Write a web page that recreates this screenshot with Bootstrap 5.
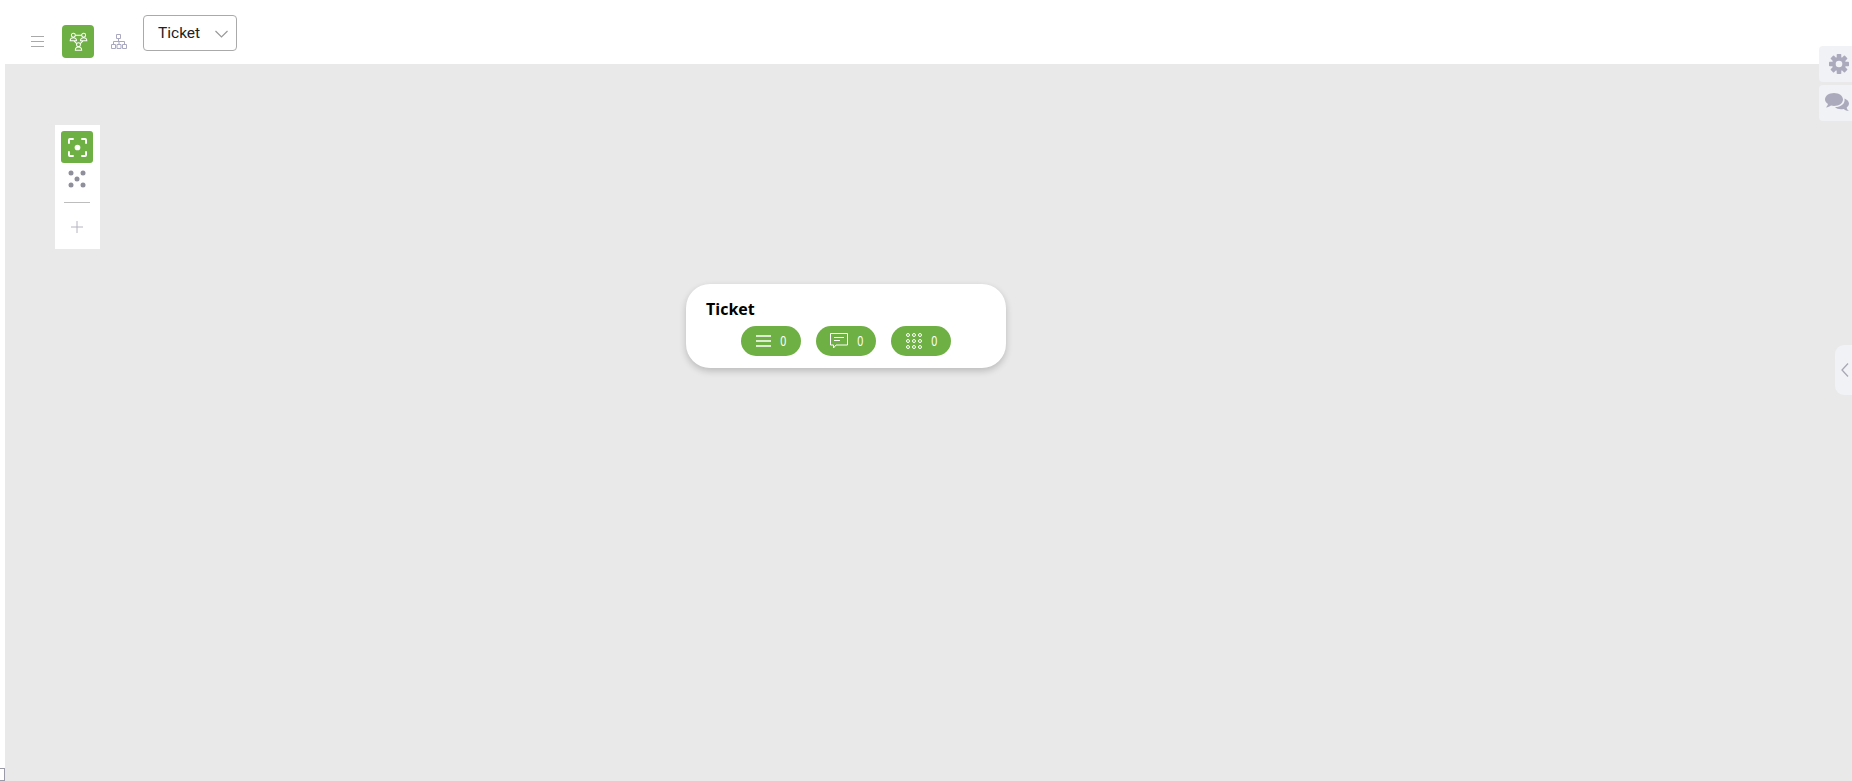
<!DOCTYPE html>
<html lang="en">
<head>
    <meta charset="UTF-8">
    <title>Ticket</title>
    <link href="https://cdn.jsdelivr.net/npm/bootstrap@5.3.2/dist/css/bootstrap.min.css" rel="stylesheet">
    <style>
        html, body { height: 100%; overflow: hidden; }
        body { font-family: Roboto, sans-serif; background: #fff; }
        .top-bar { height: 64px; padding-left: 31px; }
        .menu-btn { width: 13px; height: 11px; margin-top: 18px; }
        .mode-btn { width: 32px; height: 33px; margin: 18px 0 0 18px; background: #6eb043; border-radius: 4px; }
        .org-btn { margin: 18px 0 0 17px; width: 16px; height: 15px; }
        .type-select { width: 94px; height: 36px; margin: 2px 0 0 16px; border: 1px solid #aaa; border-radius: 4px; padding: 2px 0 0 14px; font-size: 15.500px; color: #222; }
        .canvas-area { margin-left: 5px; background: #e9e9e9; }
        .zoom-tools { left: 50px; top: 61px; width: 45px; height: 124px; padding: 6px 1px 0 0; }
        .tool-on { width: 32px; height: 32px; background: #6eb043; border-radius: 3px; }
        .tool-dots { margin-top: 7px; height: 19px; }
        .tool-line { width: 26px; height: 1px; background: #bdbdbd; margin-top: 13px; }
        .tool-plus { margin-top: 18px; }
        .entity-node { left: 681px; top: 220px; width: 320px; height: 84px; background: #fff; border-radius: 24px; box-shadow: 0 3px 7px rgba(0,0,0,.2); padding: 14px 20px 0; }
        .entity-title { font-family: "Open Sans", sans-serif; font-weight: 700; font-size: 16px; line-height: 23px; color: #000; margin: 0 0 5px; }
        .count-pill { width: 60px; height: 30px; background: #6eb043; border-radius: 15px; color: #fff; font-family: "Liberation Sans", sans-serif; font-size: 15px; padding-left: 2px; }
        .count-num { display: inline-block; transform: scaleX(.72); }
        .count-row { gap: 15px; margin-left: 35px; }
        .side-tile { right: 0; width: 33px; height: 36px; padding-right: 3px; background: #f0f2f6; border-radius: 4px 0 0 4px; }
        .panel-handle { right: 0; top: 281px; width: 17px; height: 50px; background: #f0f2f6; border-radius: 9px 0 0 9px; padding-left: 6px; }
        .corner-bit { left: 0; bottom: 0; width: 5px; height: 13px; border: 1px solid #9a9aa8; border-left: 0; }
    </style>
</head>
<body class="d-flex flex-column position-relative">
    <header class="top-bar d-flex align-items-center flex-shrink-0">
        <svg class="menu-btn" viewBox="0 0 13 11" fill="none" stroke="#a9a9a9" stroke-width="1">
            <path d="M0 .5h13M0 5.500h13M0 10.500h13"/>
        </svg>
        <div class="mode-btn d-flex align-items-center justify-content-center">
            <svg width="19" height="19" viewBox="0 0 24 24" fill="none" stroke="#fff" stroke-width="1.300">
                <circle cx="5.500" cy="4" r="2.500"/><circle cx="18.500" cy="4" r="2.500"/><circle cx="12" cy="16" r="2.500"/>
                <path d="M1.500 11c0-2.800 1.800-3.800 4-3.800s4 1 4 3.800zM14.500 11c0-2.800 1.800-3.800 4-3.800s4 1 4 3.800zM8 23c0-3 1.800-4 4-4s4 1 4 4zM8 4h8M6 11l4 4M18 11l-4 4"/>
            </svg>
        </div>
        <svg class="org-btn" viewBox="0 0 16 15" fill="none" stroke="#a8a8c0" stroke-width="1">
            <path d="M5.500.5h4v4h-4zM.5 10.500h4v4h-4zM6 10.500h4v4H6zM11.500 10.500h4v4h-4zM7.500 4.500v3M2.500 10.500v-3h11v3M8 7.500v3"/>
        </svg>
        <div class="type-select d-flex align-items-center justify-content-between">
            <span>Ticket</span>
            <svg class="me-2" width="13" height="8" viewBox="0 0 13 8" fill="none" stroke="#999" stroke-width="1.200">
                <path d="M.5 1l6 6 6-6"/>
            </svg>
        </div>
    </header>

    <main class="canvas-area flex-grow-1 position-relative">
        <div class="zoom-tools position-absolute bg-white d-flex flex-column align-items-center">
            <div class="tool-on d-flex align-items-center justify-content-center">
                <svg width="19" height="19" viewBox="0 0 20 20" fill="none" stroke="#fff" stroke-width="2">
                    <path d="M1 6V2a1 1 0 0 1 1-1h4M14 1h4a1 1 0 0 1 1 1v4M19 14v4a1 1 0 0 1-1 1h-4M6 19H2a1 1 0 0 1-1-1v-4"/>
                    <circle cx="10" cy="10" r="3" fill="#fff" stroke="none"/>
                </svg>
            </div>
            <svg class="tool-dots" width="18" height="19" viewBox="0 0 18 19" fill="#8f8f9c">
                <circle cx="3" cy="3" r="2.500"/><circle cx="15" cy="3" r="2.500"/><circle cx="9" cy="9" r="2.500"/><circle cx="3" cy="15" r="2.500"/><circle cx="15" cy="15" r="2.500"/>
            </svg>
            <div class="tool-line"></div>
            <svg class="tool-plus" width="12" height="12" viewBox="0 0 12 12" fill="none" stroke="#b4b4c0" stroke-width="1">
                <path d="M6 0v12M0 6h12"/>
            </svg>
        </div>

        <div class="entity-node position-absolute">
            <h2 class="entity-title">Ticket</h2>
            <div class="count-row d-flex">
                <div class="count-pill d-flex align-items-center justify-content-center gap-2">
                    <svg width="15" height="12" viewBox="0 0 15 12" fill="none" stroke="#fff" stroke-width="1.500">
                        <path d="M0 1h15M0 6h15M0 11h15"/>
                    </svg>
                    <span class="count-num">0</span>
                </div>
                <div class="count-pill d-flex align-items-center justify-content-center gap-2">
                    <svg width="18" height="16" viewBox="0 0 18 16" fill="none" stroke="#fff" stroke-width="1">
                        <path d="M.5.5h17v11.500H6L3.500 15v-3h-3zM4 4.500h10M4 7.500h6"/>
                    </svg>
                    <span class="count-num">0</span>
                </div>
                <div class="count-pill d-flex align-items-center justify-content-center gap-2">
                    <svg width="16" height="16" viewBox="0 0 16 16" fill="none" stroke="#fff" stroke-width="1">
                        <circle cx="2" cy="2" r="1.500"/><circle cx="8" cy="2" r="1.500"/><circle cx="14" cy="2" r="1.500"/>
                        <circle cx="2" cy="8" r="1.500"/><circle cx="8" cy="8" r="1.500"/><circle cx="14" cy="8" r="1.500"/>
                        <circle cx="2" cy="14" r="1.500"/><circle cx="8" cy="14" r="1.500"/><circle cx="14" cy="14" r="1.500"/>
                    </svg>
                    <span class="count-num">0</span>
                </div>
            </div>
        </div>

        <div class="panel-handle position-absolute d-flex align-items-center">
            <svg width="8" height="14" viewBox="0 0 8 14" fill="none" stroke="#a8a8b4" stroke-width="1.300">
                <path d="M7 .5L1 7l6 6.500"/>
            </svg>
        </div>
    </main>

    <div class="side-tile position-absolute d-flex align-items-center justify-content-end" style="top:46px">
        <svg width="20" height="20" viewBox="-10 -10 20 20" fill="#abaabd">
            <g>
                <rect x="-2.300" y="-10" width="4.600" height="20" rx=".8"/>
                <rect x="-2.300" y="-10" width="4.600" height="20" rx=".8" transform="rotate(45)"/>
                <rect x="-2.300" y="-10" width="4.600" height="20" rx=".8" transform="rotate(90)"/>
                <rect x="-2.300" y="-10" width="4.600" height="20" rx=".8" transform="rotate(135)"/>
            </g>
            <circle r="5.200" fill="none" stroke="#abaabd" stroke-width="3.400"/>
            <circle r="3.300" fill="#f0f2f6"/>
        </svg>
    </div>
    <div class="side-tile position-absolute d-flex align-items-center justify-content-end" style="top:85px">
        <svg width="24" height="20" viewBox="0 0 24 20" fill="#abaabd">
            <path d="M9 0c5 0 9 2.800 9 6.500S14 13 9 13c-1 0-2-.1-3-.4C4.500 13.700 3 14.500 1 14.500c1-1 1.700-2.200 2-3.500C1.200 9.800 0 8.200 0 6.500 0 2.800 4 0 9 0z"/>
            <path d="M19.500 5.500c2.500 1 4.500 2.800 4.500 5 0 1.500-.9 2.900-2.300 3.900.2 1.300.9 2.500 2.300 3.600-2.200 0-4-.8-5.300-2-.9.200-1.700.3-2.700.3-2.500 0-4.800-1-6-2.300 5 .3 10.500-2.600 9.500-8.500z"/>
        </svg>
    </div>
    <div class="corner-bit position-absolute"></div>
</body>
</html>
